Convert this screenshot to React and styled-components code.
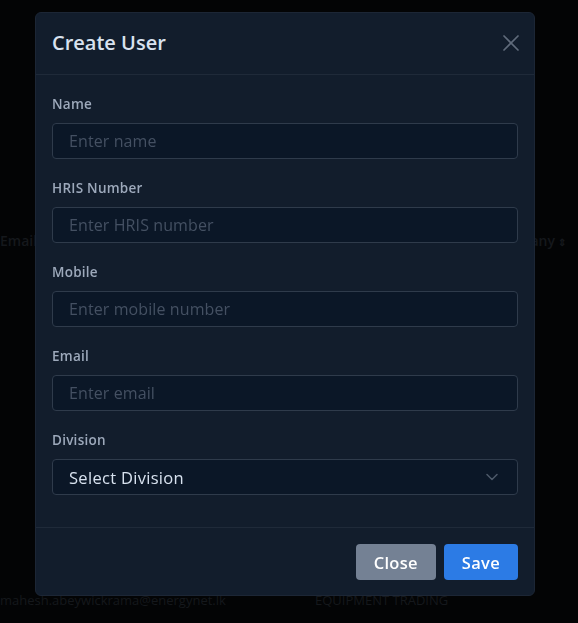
import React from "react";
import styled, { createGlobalStyle } from "styled-components";

const Global = createGlobalStyle`
  html, body { margin: 0; padding: 0; background: #030405; }
  body { font-family: "Open Sans", "Noto Sans", sans-serif; }
  * { box-sizing: border-box; }
`;

const Page = styled.div`
  width: 578px;
  height: 623px;
  overflow: hidden;
  background: #030405;
  color: #15181c;
  font-family: "Open Sans", sans-serif;
  font-size: 14px;
`;

const HeadRow = styled.div`
  display: flex;
  justify-content: space-between;
  align-items: center;
  padding: 229px 12px 0 0;
  font-weight: 600;
  height: 252px;
`;

const SortIcon = styled.span`
  font-size: 10px;
  margin-left: 3px;
`;

const BodyRow = styled.div`
  display: grid;
  grid-template-columns: 315px 1fr;
  padding-top: 338px;
  line-height: 20px;
  font-size: 13px;
`;

const Overlay = styled.div`
  position: fixed;
  inset: 0;
  padding: 12px 0 0 35px;
`;

const Modal = styled.div`
  width: 500px;
  height: 584px;
  background: #121d2c;
  border: 1px solid #1c2635;
  border-radius: 6px;
  display: flex;
  flex-direction: column;
  font-family: "Open Sans", sans-serif;
`;

const Header = styled.div`
  display: flex;
  align-items: center;
  justify-content: space-between;
  padding: 15px 15px 16px 16px;
  border-bottom: 1px solid #1f2a39;
`;

const Title = styled.h5`
  margin: 0;
  font-size: 20px;
  line-height: 30px;
  font-weight: 600;
  color: #d8e2ef;
  letter-spacing: 0;
`;

const CloseX = styled.button`
  width: 16px;
  height: 16px;
  padding: 0;
  border: 0;
  background: transparent;
  display: flex;
  cursor: pointer;
`;

const Body = styled.div`
  flex: 1;
  display: flex;
  flex-direction: column;
  gap: 15px;
  padding: 15px 16px 0 16px;
  border-bottom: 1px solid #1f2a39;
`;

const Field = styled.div`
  display: flex;
  flex-direction: column;
`;

const Label = styled.label`
  font-size: 13.5px;
  line-height: 20px;
  font-weight: 600;
  color: #9da9bb;
  letter-spacing: 0.25px;
  padding-top: 4px;
  margin-bottom: 9px;
`;

const Input = styled.input`
  height: 36px;
  width: 100%;
  background: #0b1727;
  border: 1px solid #2f3b4b;
  border-radius: 4px;
  padding: 0 16px;
  font-family: "Open Sans", sans-serif;
  font-size: 16px;
  letter-spacing: 0.1px;
  color: #d8e2ef;
  outline: none;
  &::placeholder { color: #445062; }
`;

const SelectBox = styled.div`
  height: 36px;
  background: #0b1727;
  border: 1px solid #2f3b4b;
  border-radius: 4px;
  padding: 0 19px 0 16px;
  display: flex;
  align-items: center;
  justify-content: space-between;
  font-size: 16.5px;
  font-weight: 500;
  letter-spacing: 0.3px;
  color: #d8e2ef;
`;

const Footer = styled.div`
  display: flex;
  justify-content: flex-end;
  gap: 8px;
  padding: 16px 16px 15px;
`;

const Button = styled.button`
  height: 36px;
  padding: 0 ${(p) => p.$px}px;
  border: 0;
  border-radius: 4px;
  background: ${(p) => p.$bg};
  color: #fff;
  font-family: "Open Sans", sans-serif;
  font-size: 16.5px;
  font-weight: 600;
  letter-spacing: 0.3px;
  cursor: pointer;
`;

function Chevron() {
  return (
    <svg width="12" height="8" viewBox="0 0 12 8" fill="none">
      <path d="M1 1.5 L6 6.5 L11 1.5" stroke="#4d5969" strokeWidth="1.5" strokeLinecap="round" strokeLinejoin="round" />
    </svg>
  );
}

function XIcon() {
  return (
    <svg width="16" height="16" viewBox="0 0 16 16">
      <path d="M1 1 L15 15 M15 1 L1 15" stroke="#606b7b" strokeWidth="1.7" strokeLinecap="round" />
    </svg>
  );
}

const fields = [
  { label: "Name", ph: "Enter name" },
  { label: "HRIS Number", ph: "Enter HRIS number" },
  { label: "Mobile", ph: "Enter mobile number" },
  { label: "Email", ph: "Enter email" },
];

export default function App() {
  return (
    <>
      <Global />
      <Page>
        <HeadRow>
          <span>Email</span>
          <span>Company<SortIcon>⇕</SortIcon></span>
        </HeadRow>
        <BodyRow>
          <span>mahesh.abeywickrama@energynet.lk</span>
          <span>EQUIPMENT TRADING</span>
        </BodyRow>
      </Page>
      <Overlay>
        <Modal>
          <Header>
            <Title>Create User</Title>
            <CloseX aria-label="Close"><XIcon /></CloseX>
          </Header>
          <Body>
            {fields.map((f) => (
              <Field key={f.label}>
                <Label>{f.label}</Label>
                <Input placeholder={f.ph} />
              </Field>
            ))}
            <Field>
              <Label>Division</Label>
              <SelectBox>
                <span>Select Division</span>
                <Chevron />
              </SelectBox>
            </Field>
          </Body>
          <Footer>
            <Button $bg="#748194" $px={18}>Close</Button>
            <Button $bg="#2c7be5" $px={18}>Save</Button>
          </Footer>
        </Modal>
      </Overlay>
    </>
  );
}
